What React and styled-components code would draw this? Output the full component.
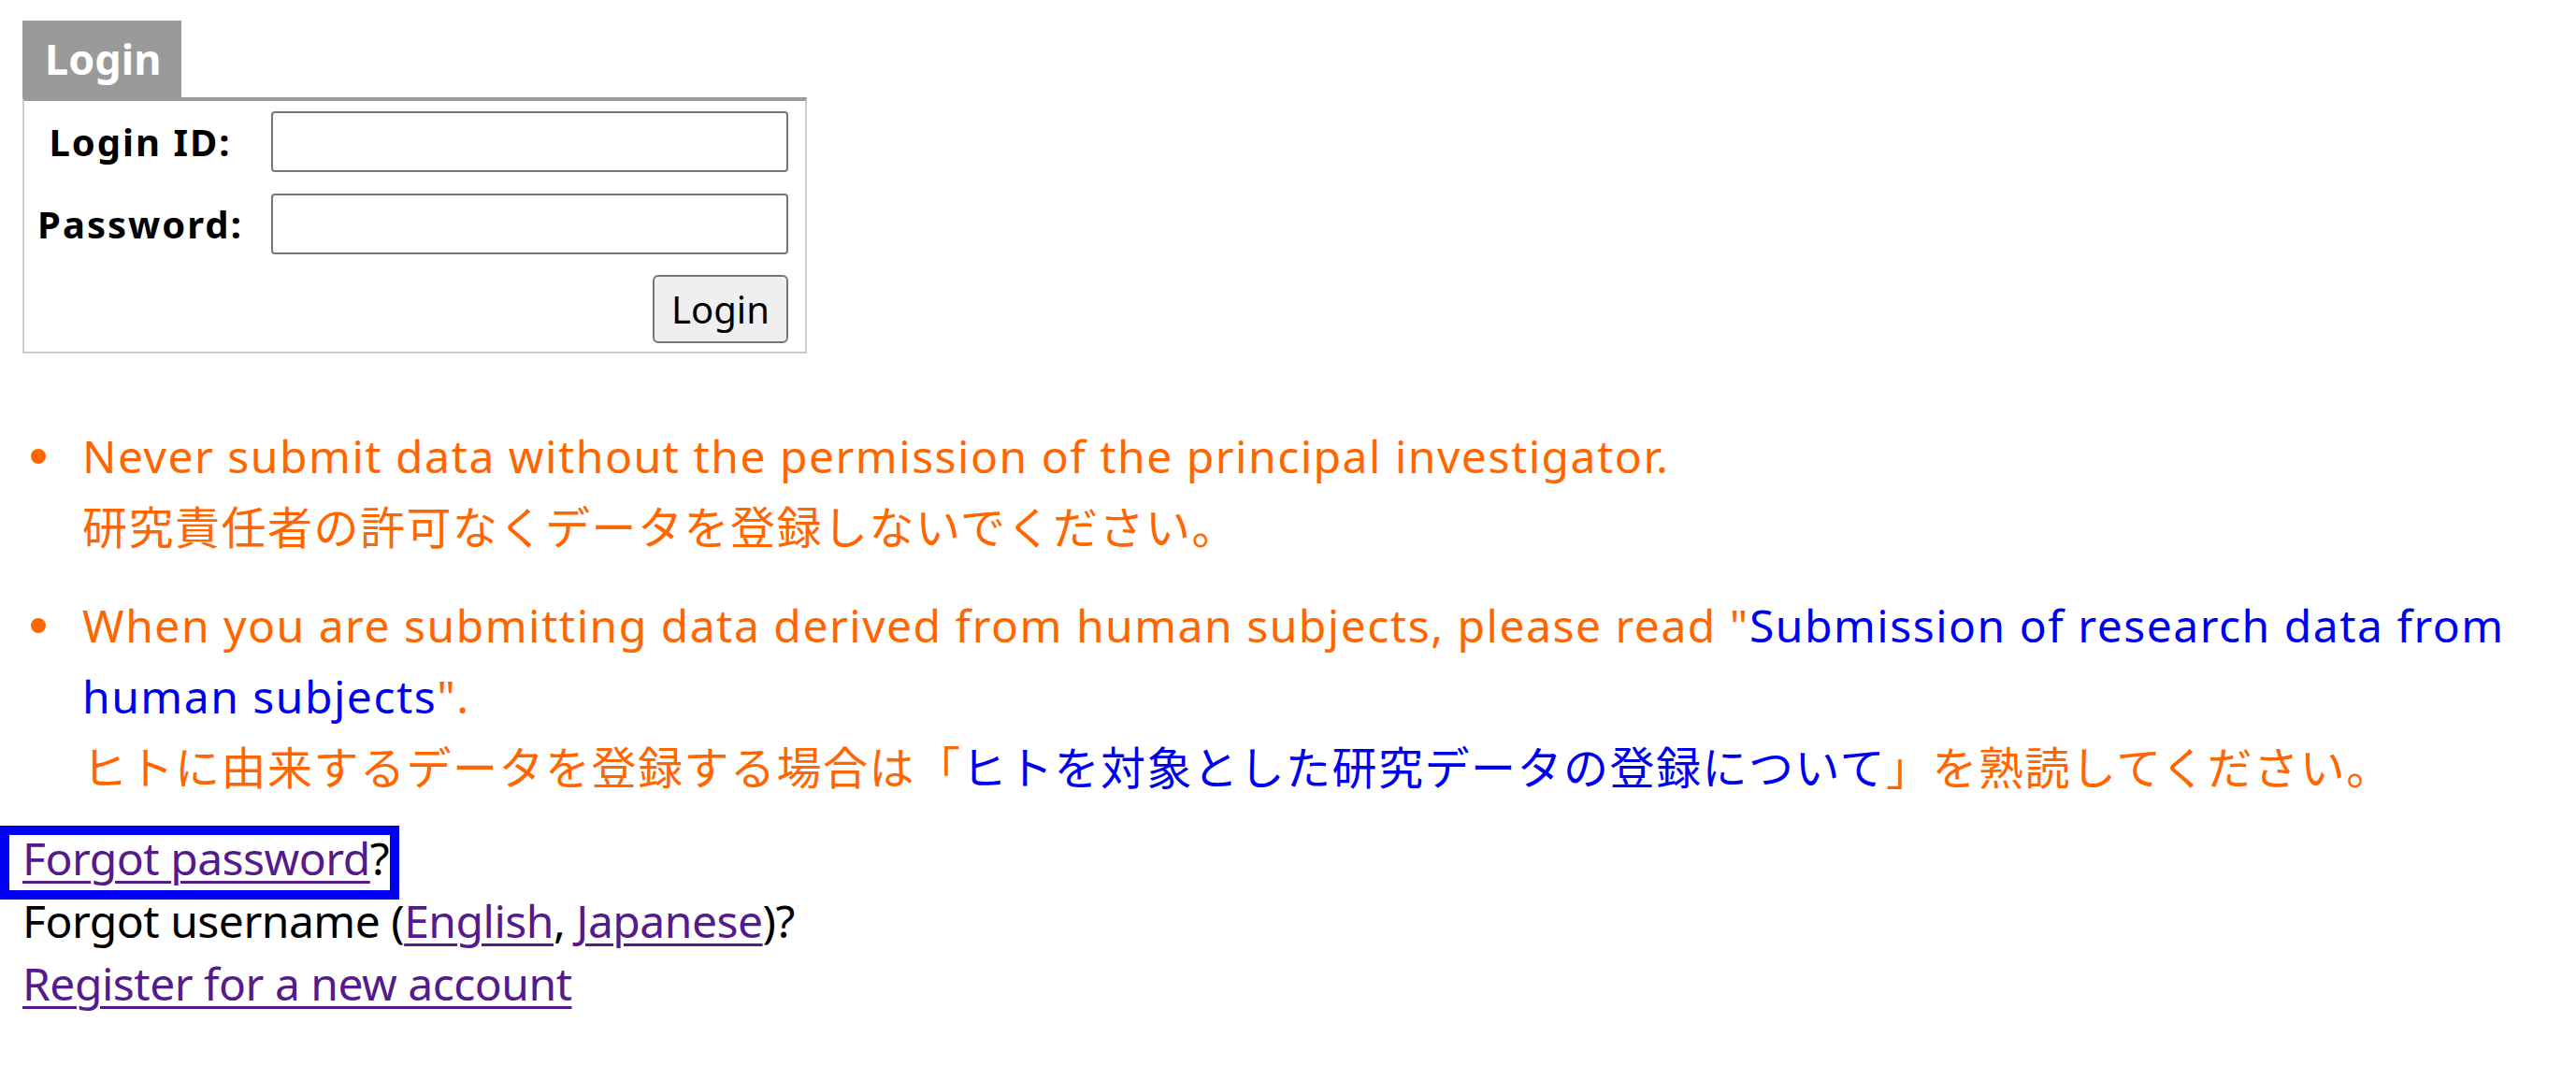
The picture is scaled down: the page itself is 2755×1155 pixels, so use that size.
import React from "react";
import styled, { createGlobalStyle } from "styled-components";

const GlobalStyle = createGlobalStyle`
  body {
    margin: 0;
    padding: 22px 24px;
    background: #fff;
    color: #000;
    font-family: "Noto Sans", "Noto Sans CJK JP", sans-serif;
  }
`;

const Panel = styled.div`
  width: 839px;
`;

const Tab = styled.div`
  display: inline-block;
  background: #9a9a9a;
  color: #fff;
  font-weight: bold;
  font-size: 45px;
  line-height: 82px;
  height: 82px;
  padding: 0 22px 0 24px;
  width: 124px;
`;

const Box = styled.form`
  display: grid;
  grid-template-columns: 248px 553px;
  column-gap: 16px;
  row-gap: 23px;
  padding: 11px 0 9px 0;
  border: 2px solid #cccccc;
  border-top: 4px solid #9a9a9a;
`;

const Label = styled.label`
  display: flex;
  align-items: center;
  justify-content: center;
  font-size: 40px;
  font-weight: bold;
  letter-spacing: 2px;
`;

const Input = styled.input`
  box-sizing: border-box;
  height: 65px;
  width: 553px;
  border: 2px solid #767676;
  border-radius: 4px;
  background: #fff;
  font-size: 40px;
`;

const Button = styled.button`
  grid-column: 2;
  justify-self: end;
  margin-top: -1px;
  width: 145px;
  height: 73px;
  font-family: "Noto Sans", sans-serif;
  font-size: 40px;
  color: #000;
  background: #efefef;
  border: 2px solid #767676;
  border-radius: 6px;
`;

const Notes = styled.ul`
  list-style: none;
  margin: 72px 0 0 0;
  padding: 0;
  display: flex;
  flex-direction: column;
  gap: 29px;
`;

const Note = styled.li`
  display: flex;
  color: #ff6600;
  font-size: 48px;
  line-height: 76px;
  letter-spacing: 1.5px;
`;

const Bullet = styled.span`
  flex: 0 0 64px;
  height: 76px;
  display: flex;
  align-items: center;

  &::after {
    content: "";
    width: 16px;
    height: 16px;
    margin-left: 9px;
    border-radius: 50%;
    background: #ff6600;
  }
`;

const NoteLink = styled.a`
  color: #0000f0;
  text-decoration: none;
`;

const Links = styled.div`
  margin-top: 25px;
  font-size: 48px;
  line-height: 67px;
  letter-spacing: -0.5px;
`;

const Line = styled.div``;

const Visited = styled.a`
  color: #551a8b;
  text-decoration: underline;
  text-underline-offset: 6px;
  text-decoration-thickness: 3px;
`;

const Highlight = styled.span`
  position: relative;
  display: inline-block;

  &::after {
    content: "";
    position: absolute;
    top: -1px;
    bottom: -11px;
    left: -24px;
    right: -11px;
    border: 10px solid #0000f0;
    pointer-events: none;
  }
`;

export default function App() {
  return (
    <>
      <GlobalStyle />
      <Panel>
        <Tab>Login</Tab>
        <Box onSubmit={(e) => e.preventDefault()}>
          <Label htmlFor="login-id">Login ID:</Label>
          <Input id="login-id" type="text" />
          <Label htmlFor="password">Password:</Label>
          <Input id="password" type="password" />
          <Button type="submit">Login</Button>
        </Box>
      </Panel>

      <Notes>
        <Note>
          <Bullet />
          <div>
            Never submit data without the permission of the principal investigator.
            <br />
            研究責任者の許可なくデータを登録しないでください。
          </div>
        </Note>
        <Note>
          <Bullet />
          <div>
            When you are submitting data derived from human subjects, please read "
            <NoteLink href="#">Submission of research data from human subjects</NoteLink>".
            <br />
            ヒトに由来するデータを登録する場合は「
            <NoteLink href="#">ヒトを対象とした研究データの登録について</NoteLink>
            」を熟読してください。
          </div>
        </Note>
      </Notes>

      <Links>
        <Line>
          <Highlight>
            <Visited href="#">Forgot password</Visited>?
          </Highlight>
        </Line>
        <Line>
          Forgot username (<Visited href="#">English</Visited>,{" "}
          <Visited href="#">Japanese</Visited>)?
        </Line>
        <Line>
          <Visited href="#">Register for a new account</Visited>
        </Line>
      </Links>
    </>
  );
}
